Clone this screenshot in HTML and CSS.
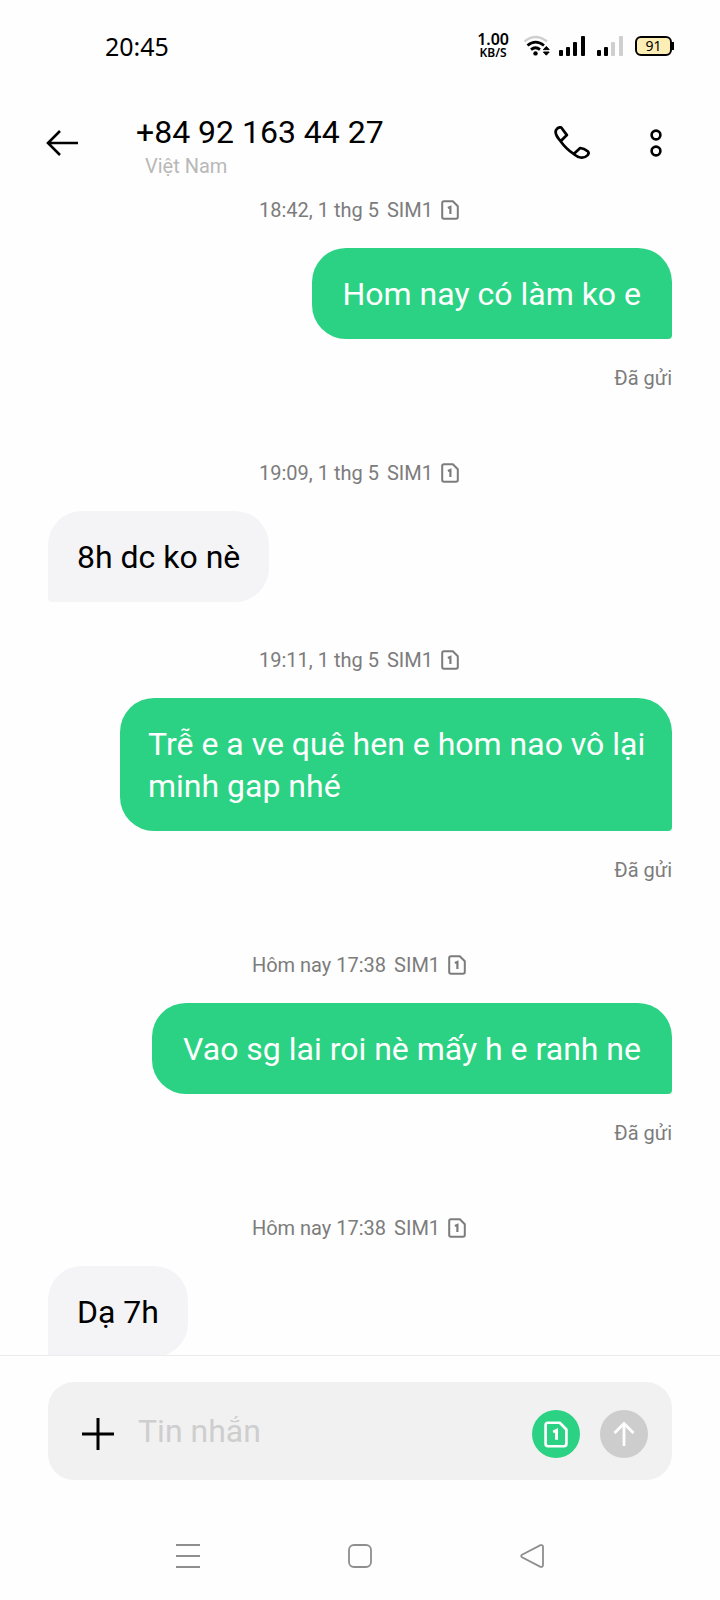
FILE: index.html
```html
<!DOCTYPE html>
<html lang="vi">
<head>
<meta charset="utf-8">
<meta name="viewport" content="width=device-width, initial-scale=1">
<title>+84 92 163 44 27</title>
<link rel="stylesheet" href="styles.css">
</head>
<body class="app">
<svg class="defs" aria-hidden="true">
  <symbol id="sim" viewBox="0 0 18 20">
    <path d="M3 1.2H11.8L16.8 6.2V17Q16.8 18.8 15 18.8H3Q1.2 18.8 1.2 17V3Q1.2 1.2 3 1.2Z" fill="none" stroke="currentColor" stroke-width="2" stroke-linejoin="round"/>
    <path d="M6.9 8.1L9.4 6.9V14" fill="none" stroke="currentColor" stroke-width="2.2"/>
  </symbol>
</svg>

<div class="statusbar">
  <time class="clock">20:45</time>
  <div class="indicators">
    <div class="speed"><span class="speed-value">1.00</span><span class="speed-unit">KB/S</span></div>
    <svg class="wifi" width="28" height="22" viewBox="0 0 28 22" aria-hidden="true">
      <path d="M1.5 6.5Q12.5-2.5 24 6.5" fill="none" stroke="#cfcfcf" stroke-width="2.6"/>
      <path d="M4.5 10.5Q12.5 3.8 21 10.5M8 14.6Q12.5 10.8 17 14.6" fill="none" stroke="#000" stroke-width="2.8"/>
      <circle cx="12.5" cy="18.4" r="2.2"/>
      <path d="M20.4 14.6L23.3 11.4L26.2 14.6ZM20.4 17L23.3 20.2L26.2 17Z" stroke="#000"/>
    </svg>
    <svg class="signal" width="26" height="22" viewBox="0 0 26 22" fill="#000" aria-hidden="true">
      <rect x="0" y="15" width="4" height="6" rx="1"/><rect x="7" y="12" width="4" height="9" rx="1"/><rect x="14" y="7" width="4" height="14" rx="1"/><rect x="22" y="1" width="4" height="20" rx="1"/>
    </svg>
    <svg class="signal" width="26" height="22" viewBox="0 0 26 22" fill="#000" aria-hidden="true">
      <rect x="0" y="15" width="4" height="6" rx="1"/><rect x="7" y="12" width="4" height="9" rx="1"/><g fill="#cfcfcf"><rect x="14" y="7" width="4" height="14" rx="1"/><rect x="22" y="1" width="4" height="20" rx="1"/></g>
    </svg>
    <div class="battery"><span class="battery-level">91</span></div>
  </div>
</div>

<header class="topbar">
  <button class="icon-button" type="button" aria-label="Quay lại">
    <svg width="34" height="28" viewBox="0 0 34 28" fill="none" stroke="#000" stroke-width="2.6" aria-hidden="true"><path d="M33 14H3M15 2L3 14L15 26"/></svg>
  </button>
  <div class="contact">
    <h1 class="contact-number">+84 92 163 44 27</h1>
    <p class="contact-place">Việt Nam</p>
  </div>
  <button class="icon-button call" type="button" aria-label="Gọi">
    <svg width="36" height="34" viewBox="0 0 38 36" fill="none" stroke="#000" stroke-width="2.9" stroke-linejoin="round" aria-hidden="true">
      <path d="M3.2 2.8Q5.4 .9 7.6 1.6L13.6 9.6L6.9 16.1M3.2 2.8C.8 5.2 1.4 10 6.9 16.1Q13 24.5 20.8 29.6C26.5 34.5 32 34.5 35.6 30.8Q37.5 28.4 35.6 26.8Q31.8 23.7 27.7 23.3L20.8 29.6"/>
    </svg>
  </button>
  <button class="icon-button" type="button" aria-label="Tuỳ chọn khác">
    <svg width="12" height="28" viewBox="0 0 12 28" fill="none" stroke="#000" stroke-width="2.6" aria-hidden="true"><circle cx="6" cy="6" r="4.4"/><circle cx="6" cy="22" r="4.4"/></svg>
  </button>
</header>

<main class="thread">
  <p class="stamp"><span>18:42, 1 thg 5</span><span>SIM1</span><svg class="stamp-sim" aria-hidden="true"><use href="#sim"/></svg></p>
  <p class="bubble sent">Hom nay có làm ko e</p>
  <p class="delivery">Đã gửi</p>

  <p class="stamp"><span>19:09, 1 thg 5</span><span>SIM1</span><svg class="stamp-sim" aria-hidden="true"><use href="#sim"/></svg></p>
  <p class="bubble received">8h dc ko nè</p>

  <p class="stamp"><span>19:11, 1 thg 5</span><span>SIM1</span><svg class="stamp-sim" aria-hidden="true"><use href="#sim"/></svg></p>
  <p class="bubble sent long">Trễ e a ve quê hen e hom nao vô lại minh gap nhé</p>
  <p class="delivery">Đã gửi</p>

  <p class="stamp"><span>Hôm nay 17:38</span><span>SIM1</span><svg class="stamp-sim" aria-hidden="true"><use href="#sim"/></svg></p>
  <p class="bubble sent">Vao sg lai roi nè mấy h e ranh ne</p>
  <p class="delivery">Đã gửi</p>

  <p class="stamp"><span>Hôm nay 17:38</span><span>SIM1</span><svg class="stamp-sim" aria-hidden="true"><use href="#sim"/></svg></p>
  <p class="bubble received">Dạ 7h</p>
</main>

<form class="composer">
  <div class="field">
    <button class="icon-button" type="button" aria-label="Thêm">
      <svg width="32" height="32" viewBox="0 0 32 32" stroke="#000" stroke-width="3" aria-hidden="true"><path d="M16 0V32M0 16H32"/></svg>
    </button>
    <input class="message-input" type="text" placeholder="Tin nhắn" aria-label="Tin nhắn">
    <button class="round-button sim-button" type="button" aria-label="SIM1"><svg width="24" height="27" aria-hidden="true"><use href="#sim"/></svg></button>
    <button class="round-button send-button" type="submit" aria-label="Gửi">
      <svg width="22" height="26" viewBox="0 0 22 26" fill="none" stroke="#fff" stroke-width="2.8" aria-hidden="true"><path d="M11 25V2.5M1.5 12L11 2.5L20.5 12"/></svg>
    </button>
  </div>
</form>

<nav class="navbar">
  <button class="icon-button" type="button" aria-label="Ứng dụng gần đây"><svg width="24" height="26" viewBox="0 0 24 26" stroke="#8e8e8e" stroke-width="2" aria-hidden="true"><path d="M0 2H24M0 13H24M0 24H24"/></svg></button>
  <button class="icon-button" type="button" aria-label="Màn hình chính"><svg width="24" height="24" viewBox="0 0 24 24" fill="none" stroke="#8e8e8e" stroke-width="1.8" aria-hidden="true"><rect x="1" y="1" width="22" height="22" rx="5"/></svg></button>
  <button class="icon-button" type="button" aria-label="Trở về"><svg width="24" height="24" viewBox="0 0 24 24" fill="none" stroke="#8e8e8e" stroke-width="1.8" aria-hidden="true"><path d="M2 10.7L20.5 1.2Q22.8 .6 23 2.8V21.2Q22.8 23.4 20.5 22.8L2 13.3Q.4 12 2 10.7Z"/></svg></button>
</nav>
</body>
</html>
```
FILE: styles.css
```css
* {
  box-sizing: border-box;
}

.app {
  display: flex;
  flex-direction: column;
  height: 100vh;
  margin: 0;
  background: #fefefe;
  color: #000;
  font-family: Roboto, "Noto Sans", sans-serif;
}

.defs {
  position: absolute;
  width: 0;
  height: 0;
}

.icon-button {
  display: flex;
  flex: none;
  padding: 0;
  border: 0;
  background: none;
}

/* System status bar */
.statusbar {
  display: flex;
  flex: none;
  justify-content: space-between;
  align-items: center;
  height: 92px;
  padding: 0 46px 0 105px;
  font-family: "Noto Sans", Roboto, sans-serif;
}

.clock {
  font-size: 25px;
}

.indicators {
  display: flex;
  align-items: center;
}

.speed {
  display: flex;
  flex-direction: column;
  align-items: center;
  margin-right: 14px;
  font-weight: 600;
}

.speed-value {
  font-size: 16px;
  line-height: 13px;
}

.speed-unit {
  font-size: 12px;
  line-height: 13px;
}

.wifi {
  margin-right: 8px;
}

.signal {
  margin-right: 12px;
}

.battery {
  display: flex;
  align-items: center;
}

.battery-level {
  width: 37px;
  border: 2px solid #000;
  border-radius: 6px;
  background: #fdeeb5;
  font-size: 14px;
  line-height: 16px;
  text-align: center;
}

.battery::after {
  width: 2px;
  height: 8px;
  background: #000;
  content: "";
}

/* Conversation header */
.topbar {
  display: flex;
  flex: none;
  align-items: center;
  height: 102px;
  padding: 0 58px 0 45px;
}

.contact {
  flex: 1;
  padding: 6px 0 0 57px;
}

.contact-number,
.contact-place {
  margin: 0;
  font-weight: 400;
}

.contact-number {
  font-size: 32px;
  line-height: 40px;
}

.contact-place {
  padding-left: 9px;
  color: #b8b8b8;
  font-size: 20px;
  line-height: 28px;
}

.call {
  margin-right: 60px;
}

/* Messages */
.thread {
  display: flex;
  flex: 1;
  flex-direction: column;
  min-height: 0;
  padding: 2px 48px 0;
  overflow-y: auto;
  scrollbar-width: none;
}

.stamp {
  display: flex;
  flex: none;
  justify-content: center;
  align-items: center;
  gap: 8px;
  margin: 44px 0 24px;
  padding-right: 2px;
  color: #7c7c7c;
  font-size: 20px;
  line-height: 28px;
}

.stamp:first-child {
  margin-top: 0;
}

.stamp-sim {
  width: 18px;
  height: 20px;
}

.bubble {
  flex: none;
  max-width: 552px;
  margin: 0;
  padding: 25px 29px 24px;
  font-size: 32px;
  line-height: 42px;
}

.sent {
  align-self: flex-end;
  padding-right: 31px;
  padding-left: 31px;
  border-radius: 34px 34px 4px 34px;
  background: #2bd283;
  color: #fff;
}

.long {
  padding-right: 24px;
  padding-left: 28px;
}

.received {
  align-self: flex-start;
  border-radius: 34px 34px 34px 4px;
  background: #f4f4f7;
}

.delivery {
  flex: none;
  margin: 0;
  padding: 25px 0 23px;
  color: #7c7c7c;
  font-size: 20px;
  line-height: 28px;
  text-align: right;
}

/* Message composer */
.composer {
  flex: none;
  padding: 26px 48px 32px;
  border-top: 1px solid #ececec;
}

.field {
  display: flex;
  align-items: center;
  gap: 20px;
  padding: 28px 24px 22px 34px;
  border-radius: 26px;
  background: #f1f1f1;
}

.message-input {
  flex: 1;
  min-width: 0;
  height: 48px;
  padding: 0 0 6px 4px;
  border: 0;
  outline: 0;
  background: none;
  color: #000;
  font: 32px Roboto, "Noto Sans", sans-serif;
}

.message-input::placeholder {
  color: #cecece;
}

.round-button {
  display: flex;
  flex: none;
  justify-content: center;
  align-items: center;
  width: 48px;
  height: 48px;
  padding: 0;
  border: 0;
  border-radius: 50%;
  color: #fff;
}

.sim-button {
  background: #2bd283;
}

.send-button {
  background: #cdcdcd;
}

/* System navigation */
.navbar {
  display: flex;
  flex: none;
  justify-content: space-between;
  align-items: center;
  height: 88px;
  padding: 0 176px;
}
```
